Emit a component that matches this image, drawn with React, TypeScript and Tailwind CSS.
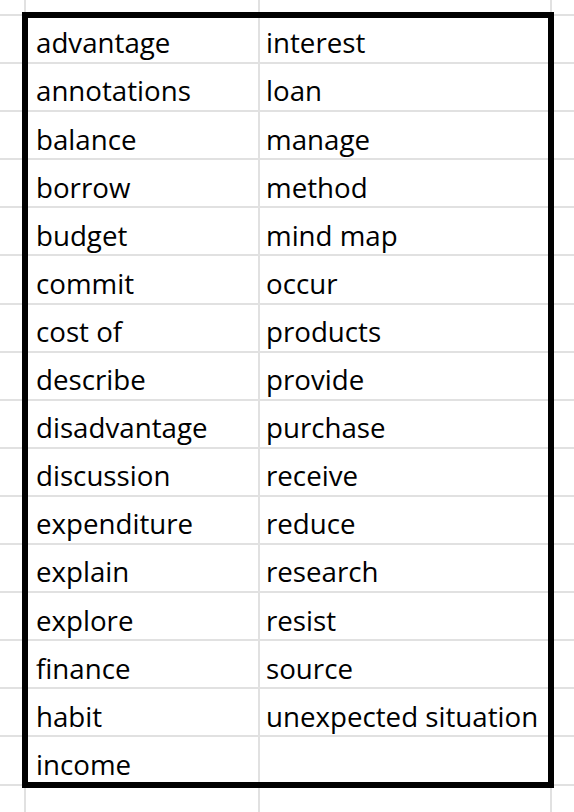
const LEFT = [
  'advantage', 'annotations', 'balance', 'borrow', 'budget', 'commit', 'cost of', 'describe',
  'disadvantage', 'discussion', 'expenditure', 'explain', 'explore', 'finance', 'habit', 'income',
];
const RIGHT = [
  'interest', 'loan', 'manage', 'method', 'mind map', 'occur', 'products', 'provide',
  'purchase', 'receive', 'reduce', 'research', 'resist', 'source', 'unexpected situation', '',
];

const font = { fontFamily: '"Open Sans", "Noto Sans", sans-serif' };

function EmptyCells({ count }: { count: number }) {
  return (
    <>
      {Array.from({ length: count }).map((_, i) => (
        <div key={i} className="h-[46.1px] bg-white" />
      ))}
    </>
  );
}

function EdgeStrip({ className }: { className: string }) {
  return (
    <div className={`grid grid-cols-[24px_232px_290px_1fr] gap-[2px] ${className}`}>
      <div className="bg-white" />
      <div className="bg-white" />
      <div className="bg-white" />
      <div className="bg-white" />
    </div>
  );
}

export default function App() {
  return (
    <div className="w-[574px] h-[812px] overflow-hidden bg-[#e1e1e1] flex flex-col gap-[2px]" style={font}>
      <EdgeStrip className="h-[14px] shrink-0" />

      {/* middle band: gutter column, selected range, trailing column */}
      <div className="flex gap-[2px] shrink-0">
        <div className="w-[24px] flex flex-col gap-[2px]">
          <EmptyCells count={16} />
        </div>

        <div className="relative z-10 w-[524px] grid grid-cols-[232px_290px] gap-[2px] outline-solid outline-[6px] outline-black outline-offset-[-2px]">
          {LEFT.map((word, i) => (
            <div key={i} className="contents">
              <div className="h-[46.1px] bg-white flex items-end pl-[10px] pb-[5px]">
                <span className="text-[27.7px] leading-none text-black whitespace-nowrap">{word}</span>
              </div>
              <div className="h-[46.1px] bg-white flex items-end pl-[6px] pb-[5px]">
                <span className="text-[27.7px] leading-none text-black whitespace-nowrap">{RIGHT[i]}</span>
              </div>
            </div>
          ))}
        </div>

        <div className="flex-1 flex flex-col gap-[2px]">
          <EmptyCells count={16} />
        </div>
      </div>

      <EdgeStrip className="flex-1" />
    </div>
  );
}
